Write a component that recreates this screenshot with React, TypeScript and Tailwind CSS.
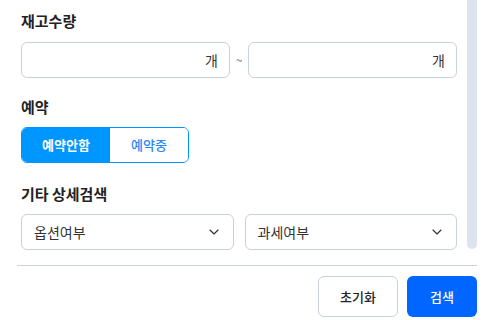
import { ChevronDown } from "lucide-react";

const font = { fontFamily: '"Noto Sans CJK KR", "Noto Sans", sans-serif' };

const SectionLabel = ({ children, className = "" }: any) => (
  <div className={`text-[15px] font-bold leading-[22px] text-[#222] ${className}`}>{children}</div>
);

const UnitInput = () => (
  <div className="flex-1 h-[36px] rounded-[6px] border border-[#c9d1dd] bg-white flex items-center justify-end pr-[11px]">
    <span className="text-[14px] text-[#333]">개</span>
  </div>
);

const Select = ({ label }: { label: string }) => (
  <div className="flex-1 h-[36px] rounded-[6px] border border-[#c9d1dd] bg-white flex items-center justify-between pl-[12px] pr-[11px]">
    <span className="text-[14px] text-[#333]">{label}</span>
    <ChevronDown size={16} strokeWidth={1.75} className="text-[#333]" />
  </div>
);

export default function App() {
  return (
    <div className="w-[490px] h-[320px] bg-white overflow-hidden flex flex-col" style={font}>
      <div className="flex h-[249px]">
        <div className="flex-1 pl-[21px] pr-[10px] pt-[10px]">
          <SectionLabel>재고수량</SectionLabel>
          <div className="flex items-center mt-[10px]">
            <UnitInput />
            <span className="w-[18px] text-center text-[12px] text-[#666]">~</span>
            <UnitInput />
          </div>

          <SectionLabel className="mt-[18px]">예약</SectionLabel>
          <div className="mt-[9px] flex w-[168px] h-[36px] rounded-[6px] border border-[#0096ff] overflow-hidden">
            <button className="w-[88px] bg-[#0096ff] text-white text-[13px] font-bold">예약안함</button>
            <button className="flex-1 bg-white text-[#2b86f6] text-[13px] font-medium">예약중</button>
          </div>

          <SectionLabel className="mt-[20px]">기타 상세검색</SectionLabel>
          <div className="mt-[9px] flex gap-[11px]">
            <Select label="옵션여부" />
            <Select label="과세여부" />
          </div>
        </div>
        <div className="w-[10px] mr-[13px] bg-[#dde3ef] rounded-b-[5px]" />
      </div>

      <div className="mt-[16px] mr-[13px] ml-[17px] border-t border-[#ccd3de]" />

      <div className="flex justify-end gap-[9px] pr-[13px] mt-[10px]">
        <button className="w-[80px] h-[41px] rounded-[6px] border border-[#c9d1dd] bg-white text-[13px] font-medium text-[#222]">
          초기화
        </button>
        <button className="w-[70px] h-[41px] rounded-[6px] bg-[#0066ff] text-[13px] font-medium text-white">
          검색
        </button>
      </div>
    </div>
  );
}
